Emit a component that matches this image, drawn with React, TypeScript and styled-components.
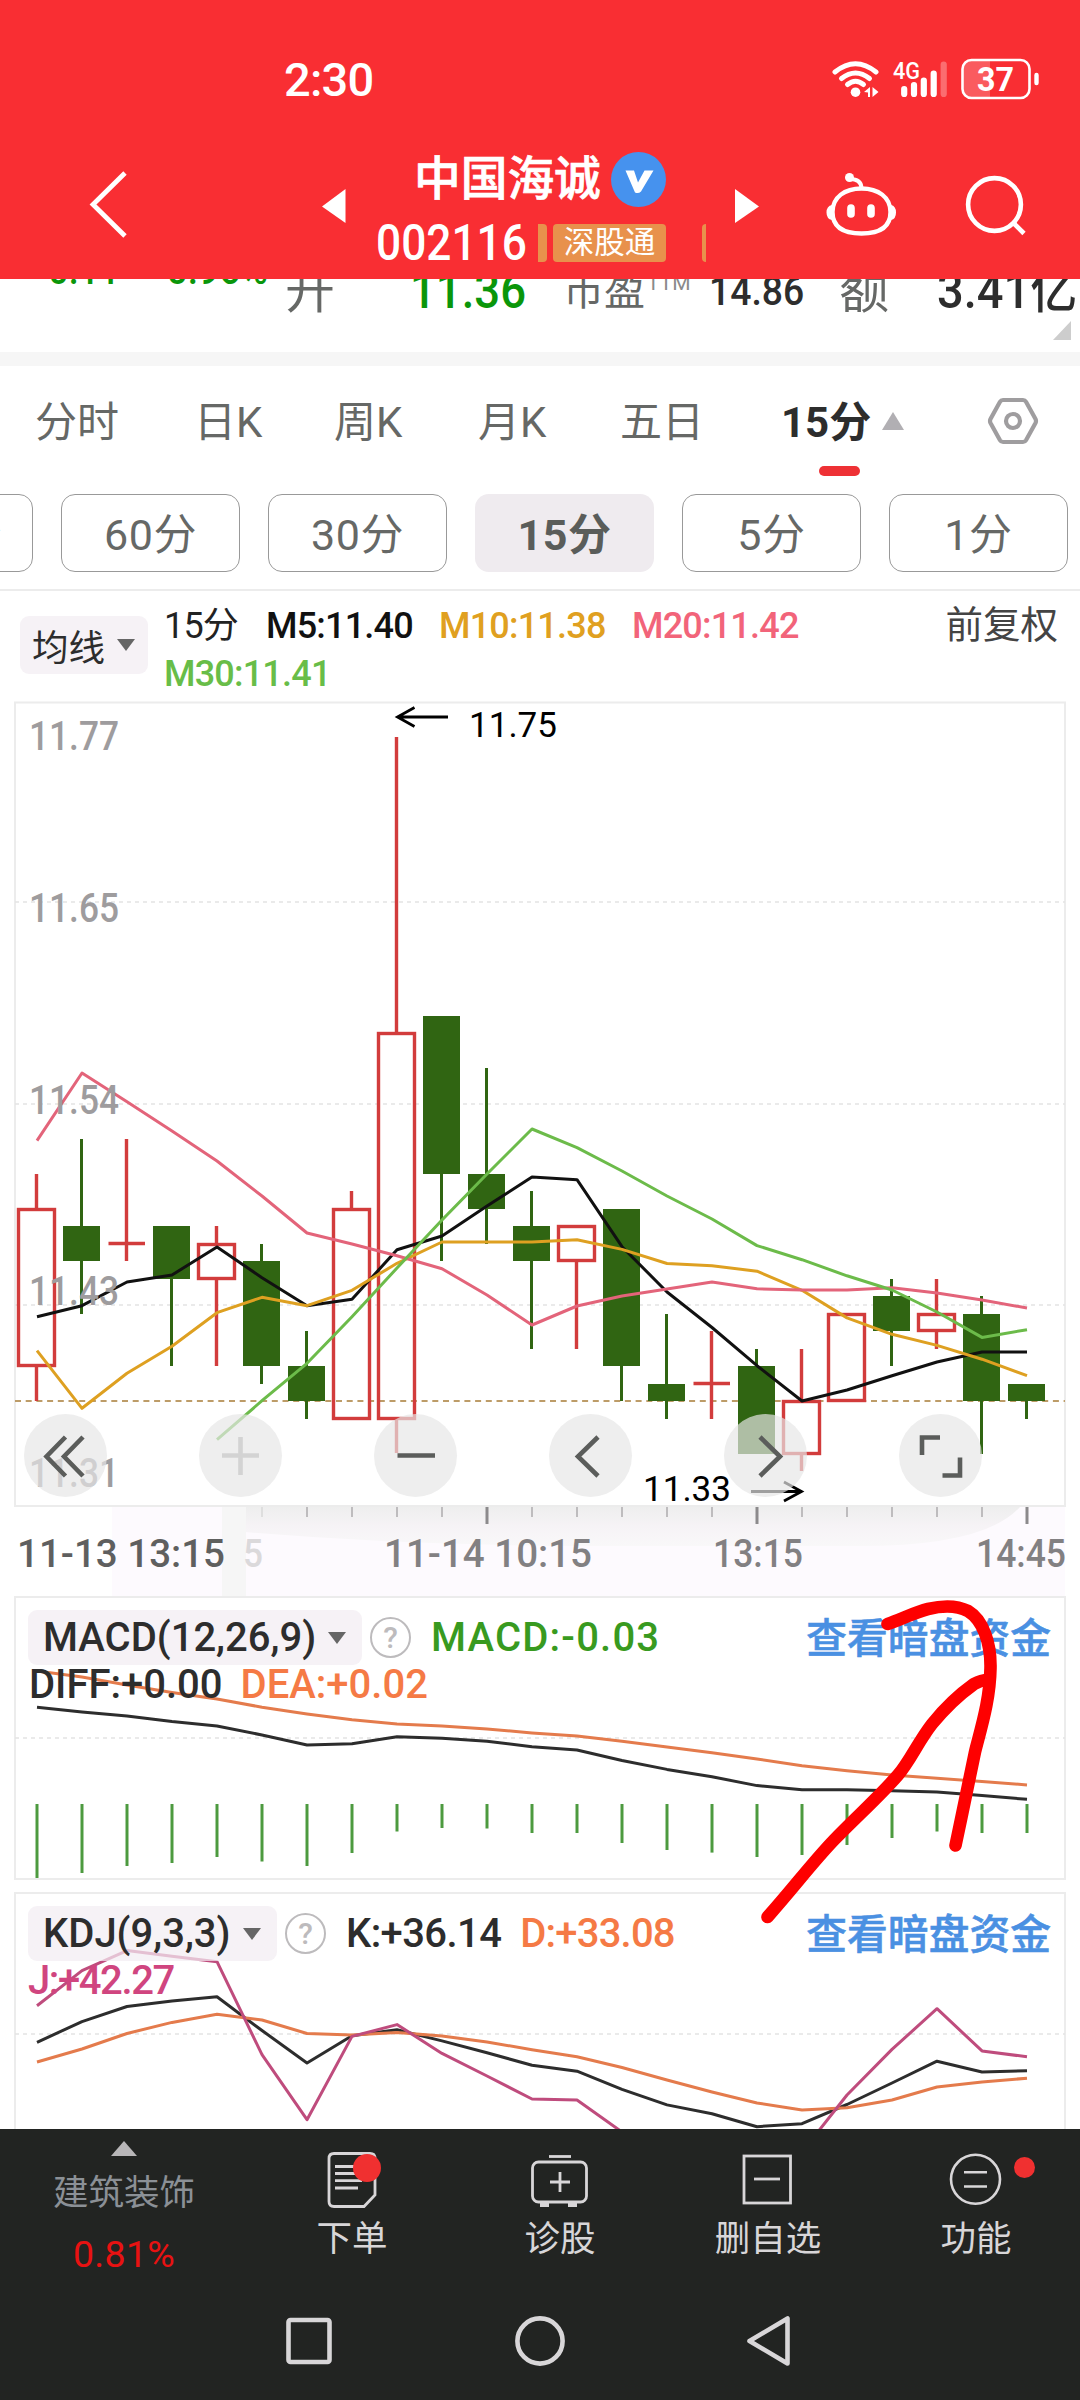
import React from 'react';
import styled, { createGlobalStyle } from 'styled-components';

const Global = createGlobalStyle`
  * { box-sizing: border-box; }
  html, body { margin: 0; padding: 0; background: #fff; }
  body {
    font-family: Roboto, "Noto Sans CJK SC", "Noto Sans", sans-serif;
    -webkit-font-smoothing: antialiased;
  }
`;

const SANS = 'Roboto, "Noto Sans CJK SC", sans-serif';

const Screen = styled.main`
  position: relative;
  width: 1080px;
  height: 2400px;
  overflow: hidden;
  display: flex;
  flex-direction: column;
  background: #fff;
`;

/* ---------- header ---------- */

const Header = styled.header`
  flex: none;
  height: 279px;
  background: #f92e33;
  color: #fff;
`;

const StatusBar = styled.div`
  display: flex;
  justify-content: space-between;
  height: 131px;
  padding: 55px 39px 0 284px;
`;

const Clock = styled.span`
  font-size: 47px;
  font-weight: 500;
  line-height: 50px;
  letter-spacing: -0.8px;
`;

const TitleBar = styled.div`
  display: grid;
  grid-template-columns: 322px 54px 359px 89px 135px 121px;
  height: 148px;
  align-items: center;
`;

const BackSlot = styled.div`
  display: flex;
  padding-left: 86px;
`;

const StockBlock = styled.div`
  display: flex;
  flex-direction: column;
  height: 148px;
`;

const NameRow = styled.div`
  display: flex;
  align-items: center;
  gap: 10px;
  height: 96px;
  padding-left: 38px;
`;

const StockName = styled.h1`
  margin: 0;
  font-size: 46.7px;
  font-weight: 500;
  line-height: 60px;
  width: 187px;
  -webkit-text-stroke: 0.7px currentColor;
`;

const CodeRow = styled.div`
  display: flex;
  align-items: center;
  height: 32px;
`;

const Code = styled.span`
  width: 162px;
  font-size: 50px;
  line-height: 56px;
  font-weight: 500;
  white-space: nowrap;
  transform: scaleX(0.885);
  transform-origin: left;
`;

const TagEdge = styled.span<{ $w: number; $side: 'l' | 'r' }>`
  width: ${(p) => p.$w}px;
  height: 38px;
  background: #e8914c;
  border-radius: ${(p) => (p.$side === 'r' ? '0 4px 4px 0' : '4px 0 0 4px')};
`;

const Tag = styled.span`
  width: 113px;
  height: 38px;
  margin: 0 36px 0 6px;
  border-radius: 4px;
  background: #e8914c;
  font-size: 30.5px;
  line-height: 37px;
  text-align: center;
`;

/* ---------- quote strip ---------- */

const QuoteStrip = styled.section`
  position: relative;
  flex: none;
  height: 73px;
  overflow: hidden;
  display: flex;
  align-items: baseline;
`;

const QuoteCell = styled.span<{
  $x: number;
  $size: number;
  $color: string;
  $weight?: number;
  $sx?: number;
  $lift?: number;
}>`
  flex: none;
  width: ${(p) => p.$x}px;
  margin-top: -18px;
  font-size: ${(p) => p.$size}px;
  line-height: 60px;
  font-weight: ${(p) => p.$weight ?? 400};
  color: ${(p) => p.$color};
  white-space: nowrap;
  transform: translateY(${(p) => -(p.$lift ?? 0)}px) scaleX(${(p) => p.$sx ?? 1});
  transform-origin: left;
`;

const QuoteCorner = styled.span`
  position: absolute;
  right: 9px;
  bottom: 12px;
  border-left: 18px solid transparent;
  border-bottom: 19px solid #cdcdcd;
`;

const Band = styled.div`
  flex: none;
  height: 14px;
  background: #f6f6f6;
`;

/* ---------- period tabs ---------- */

const Tabs = styled.nav`
  flex: none;
  display: grid;
  grid-template-columns: 159px 140px 144px 142px 161px 206px 1fr;
  height: 128px;
  padding-left: 35px;
`;

const Tab = styled.div<{ $active?: boolean }>`
  position: relative;
  display: flex;
  align-items: center;
  height: 110px;
  padding-bottom: 5px;
  font-size: 42px;
  font-weight: ${(p) => (p.$active ? 700 : 400)};
  color: ${(p) => (p.$active ? '#2d2d2d' : '#666866')};
  white-space: nowrap;
  & > svg { margin-top: 5px; }
`;

const TabMark = styled.span`
  position: absolute;
  left: 38px;
  bottom: 0;
  width: 41px;
  height: 10px;
  border-radius: 5px;
  background: #ee3135;
`;

const UpMark = styled.span`
  margin: 4px 0 0 11px;
  border: 11px solid transparent;
  border-top: 0;
  border-bottom: 18px solid #b1afb3;
`;

const Periods = styled.div`
  flex: none;
  display: flex;
  gap: 28px;
  height: 97px;
  margin-left: -146px;
  border-bottom: 2px solid #ececec;
  width: 1226px;
`;

const Period = styled.div<{ $active?: boolean }>`
  flex: none;
  width: 179px;
  height: 78px;
  padding-bottom: 5px;
  border-radius: 14px;
  border: ${(p) => (p.$active ? '0' : '1.5px solid #999')};
  background: ${(p) => (p.$active ? '#efebef' : '#fff')};
  display: flex;
  align-items: center;
  justify-content: center;
  font-size: 43px;
  letter-spacing: 0.6px;
  font-weight: ${(p) => (p.$active ? 700 : 400)};
  color: ${(p) => (p.$active ? '#5a5d5a' : '#666866')};
`;

/* ---------- moving averages ---------- */

const AverageRow = styled.section`
  flex: none;
  display: flex;
  height: 109px;
  padding: 9px 22px 0 20px;
`;

const Picker = styled.div<{ $w: number; $h: number; $pad: number; $size: number; $mt?: number }>`
  flex: none;
  display: flex;
  align-items: center;
  width: ${(p) => p.$w}px;
  height: ${(p) => p.$h}px;
  margin-top: ${(p) => p.$mt ?? 0}px;
  padding-left: ${(p) => p.$pad}px;
  border-radius: 9px;
  background: rgba(242, 237, 243, 0.72);
  color: #2d2d2d;
  font-size: ${(p) => p.$size}px;
  white-space: nowrap;
`;

const DownMark = styled.span`
  margin-left: 12px;
  border: 9px solid transparent;
  border-bottom: 0;
  border-top: 12px solid #666;
`;

const AverageLegend = styled.div`
  flex: 1;
  display: flex;
  flex-wrap: wrap;
  align-content: flex-start;
  margin: 2px 100px 0 16px;
  font-size: 36px;
  line-height: 48px;
  font-weight: 500;
  letter-spacing: -0.8px;
`;

const Average = styled.span<{ $color: string; $w: number; $weight?: number }>`
  width: ${(p) => p.$w}px;
  color: ${(p) => p.$color};
  font-weight: ${(p) => p.$weight ?? 500};
  white-space: nowrap;
`;

const Adjust = styled.span`
  flex: none;
  margin-top: -1px;
  font-size: 37.5px;
  line-height: 52px;
  color: #444;
`;

/* ---------- charts ---------- */

const ChartStage = styled.section<{ $h: number }>`
  flex: none;
  display: grid;
  height: ${(p) => p.$h}px;
  overflow: hidden;
  & > * { grid-area: 1 / 1; }
`;

const Plot = styled.svg`
  display: block;
  font-family: ${SANS};
`;

const Controls = styled.div`
  z-index: 1;
  align-self: start;
  display: flex;
  gap: 92px;
  margin: 714px 0 0 24px;
`;

const Control = styled.button<{ $disabled?: boolean }>`
  display: flex;
  align-items: center;
  justify-content: center;
  width: 83px;
  height: 83px;
  padding: 0;
  border: 0;
  border-radius: 50%;
  background: rgba(230, 230, 230, 0.69);
  color: ${(p) => (p.$disabled ? '#d3d3d3' : '#5b5d5b')};
`;

const Legend = styled.div`
  z-index: 1;
  align-self: start;
  padding: 14px 29px 0 28px;
  font-size: 40px;
  font-weight: 500;
`;

const LegendRow = styled.div`
  display: flex;
  align-items: center;
  height: 55px;
`;

const LegendSub = styled.div<{ $ml: number }>`
  display: flex;
  gap: 18px;
  margin: 2px 0 0 ${(p) => p.$ml}px;
  line-height: 36px;
`;

const Value = styled.span<{ $color: string; $ml?: number; $ls?: number }>`
  margin-left: ${(p) => p.$ml ?? 0}px;
  color: ${(p) => p.$color};
  letter-spacing: ${(p) => p.$ls ?? 0}px;
  white-space: nowrap;
`;

const Help = styled.span`
  flex: none;
  display: flex;
  align-items: center;
  justify-content: center;
  width: 41px;
  height: 41px;
  margin-left: 8px;
  border: 2.5px solid #bdbbbd;
  border-radius: 50%;
  color: #bdbbbd;
  font-size: 30px;
`;

const FundLink = styled.a`
  margin: -4px 0 0 auto;
  color: #4a90e2;
  font-size: 40.7px;
  letter-spacing: 0.1px;
  white-space: nowrap;
  -webkit-text-stroke: 0.6px currentColor;
`;

const Scribble = styled.svg`
  position: absolute;
  left: 740px;
  top: 1590px;
  z-index: 3;
`;

/* ---------- bottom ---------- */

const Footer = styled.footer`
  z-index: 2;
  flex: none;
  height: 271px;
  background: #222422;
  color: #d8d6d8;
`;

const Actions = styled.div`
  display: grid;
  grid-template-columns: 248px repeat(4, 208px);
  height: 155px;
`;

const Sector = styled.div`
  display: flex;
  flex-direction: column;
  align-items: center;
  padding-top: 12px;
`;

const SectorMark = styled.span`
  border: 13px solid transparent;
  border-top: 0;
  border-bottom: 15px solid #b8b6b8;
`;

const SectorName = styled.span`
  margin-top: 13px;
  font-size: 35.5px;
  line-height: 48px;
  color: #8b9096;
`;

const SectorChange = styled.span`
  margin-top: 12px;
  font-size: 37.5px;
  line-height: 50px;
  letter-spacing: 0.3px;
  color: #e81212;
`;

const Action = styled.div`
  position: relative;
  display: flex;
  flex-direction: column;
  align-items: center;
  padding-top: 20px;
  font-size: 35.5px;
  line-height: 48px;
`;

const ActionLabel = styled.span`
  margin-top: 6px;
`;

const Dot = styled.span<{ $d: number; $x: number; $y: number }>`
  position: absolute;
  left: ${(p) => p.$x}px;
  top: ${(p) => p.$y}px;
  width: ${(p) => p.$d}px;
  height: ${(p) => p.$d}px;
  border-radius: 50%;
  background: #f03030;
`;

const SystemNav = styled.div`
  display: flex;
  justify-content: center;
  gap: 178px;
  height: 116px;
  padding-top: 30px;
`;

/* ---------- data ---------- */

type Candle = [kind: 'u' | 'd' | 'x', high: number, top: number, bottom: number, low: number];

const candles: Candle[] = [
  ['u', 1174, 1209.5, 1365.5, 1401],
  ['d', 1139, 1226, 1261, 1314],
  ['x', 1139, 1243.5, 1243.5, 1261],
  ['d', 1226, 1226, 1279, 1366],
  ['u', 1226, 1244.5, 1278.5, 1366],
  ['d', 1244, 1261, 1366, 1384],
  ['d', 1331, 1366, 1401, 1419],
  ['u', 1191, 1209.5, 1418.5, 1418.5],
  ['u', 737, 1033.5, 1418.5, 1453],
  ['d', 1016, 1016, 1174, 1261],
  ['d', 1068, 1174, 1209, 1244],
  ['d', 1191, 1226, 1261, 1349],
  ['u', 1226.5, 1226.5, 1260.5, 1349],
  ['d', 1209, 1209, 1366, 1401],
  ['d', 1314, 1384, 1401, 1419],
  ['x', 1331, 1383.5, 1383.5, 1419],
  ['d', 1349, 1366, 1454, 1454],
  ['u', 1349, 1401.5, 1453.5, 1471],
  ['u', 1314.5, 1314.5, 1400.5, 1400.5],
  ['d', 1279, 1296, 1331, 1366],
  ['u', 1279, 1314.5, 1330.5, 1349],
  ['d', 1296, 1314, 1401, 1454],
  ['d', 1384, 1384, 1401, 1419],
];

const m5 = [1316.7, 1305.7, 1282, 1275, 1247, 1277.7, 1305.7, 1299.3, 1249.7, 1236, 1206, 1177, 1179.7, 1246.7, 1292, 1327.5, 1365.7, 1401, 1390, 1375.7, 1362, 1352, 1352];
const m10 = [1350.7, 1408.3, 1373.3, 1346.3, 1312.7, 1297.3, 1305.7, 1290.3, 1263.3, 1242, 1242, 1242, 1239.8, 1249.4, 1263.5, 1265.8, 1271.2, 1290.3, 1317.9, 1334.3, 1345.4, 1359.2, 1375.7];
const m20 = [1140.7, 1073, 1101.7, 1131, 1161, 1196, 1233, 1244, 1255.7, 1268.7, 1295, 1325, 1306, 1296, 1289, 1282, 1288.8, 1290, 1290, 1287.7, 1293, 1300, 1308];
const m30 = [1439.7, 1400.7, 1363.3, 1316.7, 1268, 1220, 1174, 1129, 1147.6, 1171, 1196, 1219, 1245.6, 1259.7, 1275.8, 1290, 1312, 1337.4, 1329.7];

const diff = [1707.2, 1712, 1716, 1721.6, 1726, 1735, 1745, 1743.8, 1736.8, 1738.3, 1741.2, 1746.8, 1750, 1760.5, 1769.4, 1776.8, 1785.6, 1789.7, 1789.7, 1790.8, 1792, 1795.6, 1799.3];
const dea = [1671, 1677, 1685, 1692.4, 1699, 1707.2, 1713.9, 1719.8, 1723.9, 1726, 1729, 1733, 1736, 1741.2, 1747, 1752.7, 1759, 1765.7, 1770.8, 1774.9, 1778.2, 1781.6, 1784.9];
const bars = [1878, 1873, 1866, 1863, 1857, 1861.5, 1866, 1853, 1831.5, 1828, 1828.5, 1833, 1833, 1843, 1850, 1852.6, 1857, 1855, 1845, 1838, 1831.5, 1833, 1833];

const kLine = [2042.3, 2021.6, 2006.5, 2001, 1996.8, 2030.5, 2063, 2035.7, 2029.8, 2040.9, 2052.7, 2065.3, 2071.2, 2089.3, 2104.9, 2113.7, 2126.7, 2123.7, 2104.5, 2083, 2061.2, 2072, 2070.8];
const dLine = [2062, 2049, 2033.5, 2022.4, 2014.2, 2020, 2033.5, 2035, 2032.4, 2036, 2042, 2049.7, 2056.8, 2067.5, 2080, 2092, 2103, 2110, 2107.8, 2100, 2087, 2082, 2078.2];
const jLine = [2005.7, 1970.6, 1950.6, 1956.2, 1961.7, 2054.6, 2119.7, 2036.4, 2024.6, 2053.4, 2076, 2099, 2100, 2132, 2160, 2175, 2180, 2152, 2095, 2049.4, 2008.7, 2050.9, 2056.8];

const xAt = (i: number) => 37 + 45 * i;

const Line = ({ ys, color, from = 0 }: { ys: number[]; color: string; from?: number }) => (
  <polyline
    points={ys.map((y, i) => `${xAt(i + from)},${y}`).join(' ')}
    fill="none"
    stroke={color}
    strokeWidth="3"
    strokeLinejoin="round"
  />
);

const Dash = ({ y }: { y: number }) => (
  <path d={`M15 ${y}H1065`} stroke="#e3e3e3" strokeWidth="1.4" strokeDasharray="4 4" />
);

const CandleMark = ({ c, i }: { c: Candle; i: number }) => {
  const [kind, high, top, bottom, low] = c;
  const x = xAt(i) - 0.5;
  if (kind === 'd') {
    return (
      <g fill="#306512">
        <rect x={x - 1.5} y={high} width="3" height={low - high} />
        <rect x={x - 18.5} y={top} width="37" height={bottom - top} />
      </g>
    );
  }
  if (kind === 'x') {
    return <path d={`M${x} ${high}V${low}M${x - 18} ${top}H${x + 18.5}`} stroke="#d23c3c" strokeWidth="3.400" />;
  }
  return (
    <g stroke="#d23c3c" strokeWidth="3.400" fill="none">
      <path d={`M${x} ${high}V${top}M${x} ${bottom}V${low}`} />
      <rect x={x - 18} y={top} width="36" height={bottom - top} />
    </g>
  );
};

const priceLabels: [string, number][] = [
  ['11.77', 750],
  ['11.65', 922],
  ['11.54', 1114],
  ['11.43', 1305],
  ['11.31', 1487],
];

const dateLabels: [string, number, number, string][] = [
  ['11-13 13:15', 17, 208, '#5f5f5f'],
  ['5', 243, 20, '#dbd9db'],
  ['11-14 10:15', 384, 208, '#828082'],
  ['13:15', 713, 90, '#828082'],
  ['14:45', 976, 90, '#828082'],
];

const PricePlot = () => (
  <Plot width="1080" height="896" viewBox="0 700 1080 896">
    <defs>
      <linearGradient id="shade" x1="0" y1="0" x2="0" y2="1">
        <stop offset="0" stopColor="#eeeeee" />
        <stop offset="0.5" stopColor="#f6f3f6" />
        <stop offset="1" stopColor="#f9f8f9" />
      </linearGradient>
    </defs>
    <rect x="112" y="1507" width="953" height="90" fill="#fdfafe" />
    <path d="M222 1507H1020Q985 1546 860 1546H600Q400 1546 222 1530Z" fill="url(#shade)" />
    <rect x="222" y="1507" width="24" height="90" fill="#f6f6f6" />
    <rect x="15" y="702.5" width="1050" height="803.5" fill="none" stroke="#ececec" strokeWidth="2" />
    <Dash y={902} />
    <Dash y={1104} />
    <Dash y={1305} />
    <path d="M15 1401H1065" stroke="#bd9c68" strokeWidth="1.800" strokeDasharray="6 4.700" />
    {candles.map((c, i) => (
      <CandleMark key={i} c={c} i={i} />
    ))}
    <Line ys={m5} color="#111" />
    <Line ys={m10} color="#dea021" />
    <Line ys={m20} color="#e3647a" />
    <Line ys={m30} color="#6cbb4a" from={4} />
    {priceLabels.map(([t, y]) => (
      <text key={t} x="29" y={y} fontSize="40" fontWeight="500" fill="#9e9c9e" textLength="90" lengthAdjust="spacingAndGlyphs">
        {t}
      </text>
    ))}
    <g fill="none" stroke="#000" strokeWidth="2.800">
      <path d="M397 717H448M414.500 707.500L397.500 717L414.500 726.500" />
      <path d="M751 1491.500H802M784 1482L801.500 1491.500L784 1501" />
    </g>
    <g fontSize="35" fill="#000">
      <text x="469" y="737" textLength="88" lengthAdjust="spacingAndGlyphs">11.75</text>
      <text x="643" y="1500.500" textLength="88" lengthAdjust="spacingAndGlyphs">11.33</text>
    </g>
    {Array.from({ length: 18 }, (_, k) => k + 5).map((i) => {
      const major = i === 10 || i === 16 || i === 22;
      return (
        <path
          key={i}
          d={`M${xAt(i)} 1507V${major ? 1524 : 1517}`}
          stroke={i === 5 ? '#dedede' : major ? '#8c8a8c' : '#bebcbe'}
          strokeWidth={major ? 3 : 2}
        />
      );
    })}
    {dateLabels.map(([t, x, w, color]) => (
      <text key={t + x} x={x} y="1566.500" fontSize="39" fontWeight="500" fill={color} textLength={w} lengthAdjust="spacingAndGlyphs">
        {t}
      </text>
    ))}
  </Plot>
);

const MacdPlot = () => (
  <Plot width="1080" height="296" viewBox="0 1596 1080 296">
    <rect x="15" y="1597" width="1050" height="282" fill="none" stroke="#ececec" strokeWidth="2" />
    <Dash y={1738} />
    {bars.map((y, i) => (
      <path key={i} d={`M${xAt(i)} 1804V${y}`} stroke="#4d9a3f" strokeWidth="3" />
    ))}
    <Line ys={dea} color="#e47b4c" />
    <Line ys={diff} color="#2d2d2d" />
  </Plot>
);

const KdjPlot = () => (
  <Plot width="1080" height="237" viewBox="0 1892 1080 237">
    <rect x="15" y="1893" width="1050" height="300" fill="none" stroke="#ececec" strokeWidth="2" />
    <Dash y={2034} />
    <Line ys={kLine} color="#2d2d2d" />
    <Line ys={dLine} color="#e47b4c" />
    <Line ys={jLine} color="#bf4c7d" />
  </Plot>
);

/* ---------- icons ---------- */

const StatusIcons = () => (
  <svg width="212" height="50" viewBox="829 55 212 50" fill="none" stroke="#fff" strokeLinecap="round">
    <g strokeWidth="5">
      <path d="M835 72Q855.500 55.500 876 72" />
      <path d="M841.500 78.500Q855.500 67.500 869.500 78.500" />
      <path d="M847.500 84.500Q855.500 78 863.500 84.500" />
    </g>
    <circle cx="855.500" cy="92.200" r="4.800" fill="#fff" stroke="none" />
    <path d="M864 92L870 87V97L868 97V92.500ZM878.500 92L872.500 87V97Z" fill="#fff" stroke="none" />
    <text x="893" y="78.500" fontSize="24" fontWeight="500" fill="#fff" stroke="none" fontFamily="Roboto, sans-serif" textLength="27" lengthAdjust="spacingAndGlyphs">4G</text>
    <g strokeWidth="6.200">
      <path d="M904.200 89V94M914 85V94M923.800 80.500V94M933.700 73.500V94" />
      <path d="M943.700 64.500V94" opacity="0.3" />
    </g>
    <path d="M970 61H990V97H970Q963.500 97 963.500 90V68Q963.500 61 970 61Z" fill="#fff" fillOpacity="0.22" stroke="none" />
    <rect x="962.500" y="60" width="67" height="38" rx="9" strokeWidth="2.600" />
    <path d="M1036.500 75V83" strokeWidth="4.400" />
    <text x="977" y="91" fontSize="34" fontWeight="700" fill="#fff" stroke="none" fontFamily="Roboto, sans-serif" textLength="37" lengthAdjust="spacingAndGlyphs">37</text>
  </svg>
);

const BackIcon = () => (
  <svg width="44" height="70" viewBox="86 170 44 70">
    <path d="M125 173L93 204.500L125 236" fill="none" stroke="#fff" strokeWidth="4.800" />
  </svg>
);

const StepArrow = ({ flip }: { flip?: boolean }) => (
  <svg width="24" height="36" viewBox="0 0 24 36">
    <path d={flip ? 'M0 2L24 19.500L0 36Z' : 'M23.500 2L0 19.500L23.500 36Z'} fill="#fff" />
  </svg>
);

const VBadge = () => (
  <svg width="55" height="55" viewBox="0 0 55 55">
    <circle cx="27.500" cy="27.500" r="27.500" fill="#4692ee" />
    <path d="M14.500 18.500H23L27 30.500L33.500 18.500H42.500L30 39.500Q27.500 42 24 40.500Z" fill="#fff" />
  </svg>
);

const RobotIcon = () => (
  <svg width="76" height="72" viewBox="824 170 76 72" fill="none" stroke="#fff">
    <circle cx="849.500" cy="178.500" r="4.500" fill="#fff" stroke="none" />
    <path d="M850 180Q861 180 861.500 189" strokeWidth="4" />
    <path d="M861.500 189.500C878 189.500 890.500 198 890.500 213C890.500 228 880 234.500 861.500 234.500C843 234.500 832.500 228 832.500 213C832.500 198 845 189.500 861.500 189.500Z" strokeWidth="4.400" />
    <path d="M832 206Q826.500 207 826.500 213.500Q826.500 220 832 221ZM891 206Q896 207 896 213.500Q896 220 891 221Z" fill="#fff" stroke="none" />
    <path d="M851 209V215M871 209V215" strokeWidth="7.600" strokeLinecap="round" />
  </svg>
);

const SearchIcon = () => (
  <svg width="70" height="70" viewBox="959 171 70 70" fill="none" stroke="#fff" strokeWidth="4.600">
    <circle cx="994.500" cy="205.500" r="26.400" />
    <path d="M1013 223.500L1024 234.500" />
  </svg>
);

const HexIcon = () => (
  <svg width="52" height="50" viewBox="0 0 52 50" fill="none" stroke="#9f9d9f" strokeWidth="4.200">
    <path d="M16 4H36Q38 4 39 5.700L48.500 23Q49.500 25 48.500 27L39 44.300Q38 46 36 46H16Q14 46 13 44.300L3.500 27Q2.500 25 3.500 23L13 5.700Q14 4 16 4Z" />
    <circle cx="26" cy="25" r="7" />
  </svg>
);

const controlPaths: { d: string; off?: boolean }[] = [
  { d: 'M41.500 23L22.500 42.500L41.500 62M59 23L40 42.500L59 62' },
  { d: 'M23 41.500H60M41.500 23V61', off: true },
  { d: 'M23.500 41.500H61' },
  { d: 'M49 23L29 42.500L49 62' },
  { d: 'M36 23L56 42.500L36 62' },
  { d: 'M41 23.500H23V41M61 43.500V61.500H43.500' },
];

const DocIcon = () => (
  <svg width="56" height="60" viewBox="325 2149 56 60" fill="none" stroke="#d8d6d8" strokeWidth="2.800">
    <path d="M335 2153.500H371Q376 2153.500 376 2158.500V2195L365 2206.500H335Q330 2206.500 330 2201.500V2158.500Q330 2153.500 335 2153.500Z" />
    <path d="M336 2166.500H360M336 2173.500H360M336 2180.700H363M336 2188H359" />
  </svg>
);

const CaseIcon = () => (
  <svg width="64" height="60" viewBox="528 2149 64 60" fill="none" stroke="#d8d6d8" strokeWidth="2.800">
    <path d="M549 2156.500H571" />
    <rect x="532.500" y="2162" width="54" height="40" rx="6" />
    <path d="M560 2172V2192M550 2182H570" />
    <path d="M540 2205H549M568 2205H577" strokeWidth="4" />
  </svg>
);

const RemoveIcon = () => (
  <svg width="56" height="60" viewBox="740 2149 56 60" fill="none" stroke="#d8d6d8" strokeWidth="2.800">
    <rect x="744" y="2156" width="46.500" height="47" />
    <path d="M754 2179H780" />
  </svg>
);

const MoreIcon = () => (
  <svg width="56" height="60" viewBox="948 2149 56 60" fill="none" stroke="#d8d6d8" strokeWidth="2.600">
    <circle cx="975.500" cy="2179.300" r="24.500" />
    <path d="M964 2172.300H987M964 2186.500H987" />
  </svg>
);

const actions = [
  { label: '下单', icon: <DocIcon />, dot: { d: 28, x: 105, y: 25 } },
  { label: '诊股', icon: <CaseIcon /> },
  { label: '删自选', icon: <RemoveIcon /> },
  { label: '功能', icon: <MoreIcon />, dot: { d: 21, x: 142, y: 28 } },
];

export default function App() {
  return (
    <>
      <Global />
      <Screen>
        <Header>
          <StatusBar>
            <Clock>2:30</Clock>
            <StatusIcons />
          </StatusBar>
          <TitleBar>
            <BackSlot>
              <BackIcon />
            </BackSlot>
            <StepArrow />
            <StockBlock>
              <NameRow>
                <StockName>中国海诚</StockName>
                <VBadge />
              </NameRow>
              <CodeRow>
                <Code>002116</Code>
                <TagEdge $w={9} $side="r" />
                <Tag>深股通</Tag>
                <TagEdge $w={4} $side="l" />
              </CodeRow>
            </StockBlock>
            <StepArrow flip />
            <RobotIcon />
            <SearchIcon />
          </TitleBar>
        </Header>

        <QuoteStrip>
          <QuoteCell $x={36} $size={10} $color="#fff" />
          <QuoteCell $x={118} $size={40} $color="#0a960a" $weight={500} $sx={0.9} $lift={24}>-0.11</QuoteCell>
          <QuoteCell $x={131} $size={40} $color="#0a960a" $weight={500} $sx={0.93} $lift={24}>-0.96%</QuoteCell>
          <QuoteCell $x={125} $size={50} $color="#666866">开</QuoteCell>
          <QuoteCell $x={153} $size={50} $color="#0a960a" $weight={500} $sx={0.91}>11.36</QuoteCell>
          <QuoteCell $x={84} $size={41} $color="#666866" $lift={3}>市盈</QuoteCell>
          <QuoteCell $x={62} $size={21} $color="#8a8a8a" $lift={18}>TTM</QuoteCell>
          <QuoteCell $x={130} $size={41} $color="#2d2d2d" $weight={500} $sx={0.91} $lift={3}>14.86</QuoteCell>
          <QuoteCell $x={98} $size={50} $color="#666866">额</QuoteCell>
          <QuoteCell $x={143} $size={50} $color="#2d2d2d" $weight={500} $sx={0.94}>3.41亿</QuoteCell>
          <QuoteCorner />
        </QuoteStrip>
        <Band />

        <Tabs>
          <Tab>分时</Tab>
          <Tab>日K</Tab>
          <Tab>周K</Tab>
          <Tab>月K</Tab>
          <Tab>五日</Tab>
          <Tab $active>
            15分
            <UpMark />
            <TabMark />
          </Tab>
          <Tab>
            <HexIcon />
          </Tab>
        </Tabs>

        <Periods>
          <Period>120分</Period>
          <Period>60分</Period>
          <Period>30分</Period>
          <Period $active>15分</Period>
          <Period>5分</Period>
          <Period>1分</Period>
        </Periods>

        <AverageRow>
          <Picker $w={128} $h={58} $pad={12} $size={36.5} $mt={16}>
            均线
            <DownMark />
          </Picker>
          <AverageLegend>
            <Average $color="#222" $w={102} $weight={400}>15分</Average>
            <Average $color="#111" $w={173}>M5:11.40</Average>
            <Average $color="#e0a020" $w={193}>M10:11.38</Average>
            <Average $color="#f2647a" $w={170}>M20:11.42</Average>
            <Average $color="#68bd48" $w={170}>M30:11.41</Average>
          </AverageLegend>
          <Adjust>前复权</Adjust>
        </AverageRow>

        <ChartStage $h={896}>
          <PricePlot />
          <Controls>
            {controlPaths.map((c) => (
              <Control key={c.d} $disabled={c.off}>
                <svg width="83" height="83" viewBox="0 0 83 83" fill="none" stroke="currentColor" strokeWidth="4.600">
                  <path d={c.d} />
                </svg>
              </Control>
            ))}
          </Controls>
        </ChartStage>

        <ChartStage $h={296}>
          <MacdPlot />
          <Legend>
            <LegendRow>
              <Picker $w={334} $h={55} $pad={15} $size={40}>
                MACD(12,26,9)
                <DownMark />
              </Picker>
              <Help>?</Help>
              <Value $color="#389a20" $ml={20} $ls={1.2}>MACD:-0.03</Value>
              <FundLink>查看暗盘资金</FundLink>
            </LegendRow>
            <LegendSub $ml={1}>
              <Value $color="#2d2d2d">DIFF:+0.00</Value>
              <Value $color="#f57a45">DEA:+0.02</Value>
            </LegendSub>
          </Legend>
        </ChartStage>

        <ChartStage $h={237}>
          <KdjPlot />
          <Legend>
            <LegendRow>
              <Picker $w={249} $h={55} $pad={15} $size={40}>
                KDJ(9,3,3)
                <DownMark />
              </Picker>
              <Help>?</Help>
              <Value $color="#2d2d2d" $ml={20} $ls={-0.6}>K:+36.14</Value>
              <Value $color="#f57a45" $ml={19} $ls={-0.8}>D:+33.08</Value>
              <FundLink>查看暗盘资金</FundLink>
            </LegendRow>
            <LegendSub $ml={0}>
              <Value $color="#d0457f" $ls={-1.4}>J:+42.27</Value>
            </LegendSub>
          </Legend>
        </ChartStage>

        <Footer>
          <Actions>
            <Sector>
              <SectorMark />
              <SectorName>建筑装饰</SectorName>
              <SectorChange>0.81%</SectorChange>
            </Sector>
            {actions.map((a) => (
              <Action key={a.label}>
                {a.icon}
                <ActionLabel>{a.label}</ActionLabel>
                {a.dot && <Dot $d={a.dot.d} $x={a.dot.x} $y={a.dot.y} />}
              </Action>
            ))}
          </Actions>
          <SystemNav>
            <svg width="52" height="54" viewBox="283 2314 52 54" fill="none" stroke="#d8d6d8" strokeWidth="4.600">
              <rect x="288.500" y="2320" width="41" height="42" rx="2" />
            </svg>
            <svg width="54" height="54" viewBox="513 2314 54 54" fill="none" stroke="#d8d6d8" strokeWidth="4.600">
              <circle cx="540" cy="2341" r="22.600" />
            </svg>
            <svg width="52" height="54" viewBox="745 2314 52 54" fill="none" stroke="#d8d6d8" strokeWidth="4.600" strokeLinejoin="round">
              <path d="M749.500 2341L787.500 2318.500V2363.500Z" />
            </svg>
          </SystemNav>
        </Footer>

        <Scribble width="270" height="345" viewBox="740 1590 270 345" fill="none" stroke="#fe0000" strokeWidth="12.600" strokeLinecap="round" strokeLinejoin="round">
          <path d="M887.500 1624C900 1620 915 1612 928 1609C945 1605 958 1606 968 1611C983 1620 991 1643 990.500 1668C990 1700 981 1728 975 1752C967 1790 962 1815 955.500 1845.500" />
          <path d="M767.500 1917C795 1886 812 1863 834 1840C856 1817 878 1798 898 1775C910 1761 918 1742 932 1724C945 1708 960 1694 974 1684Q981 1680 988 1680" />
        </Scribble>
      </Screen>
    </>
  );
}
